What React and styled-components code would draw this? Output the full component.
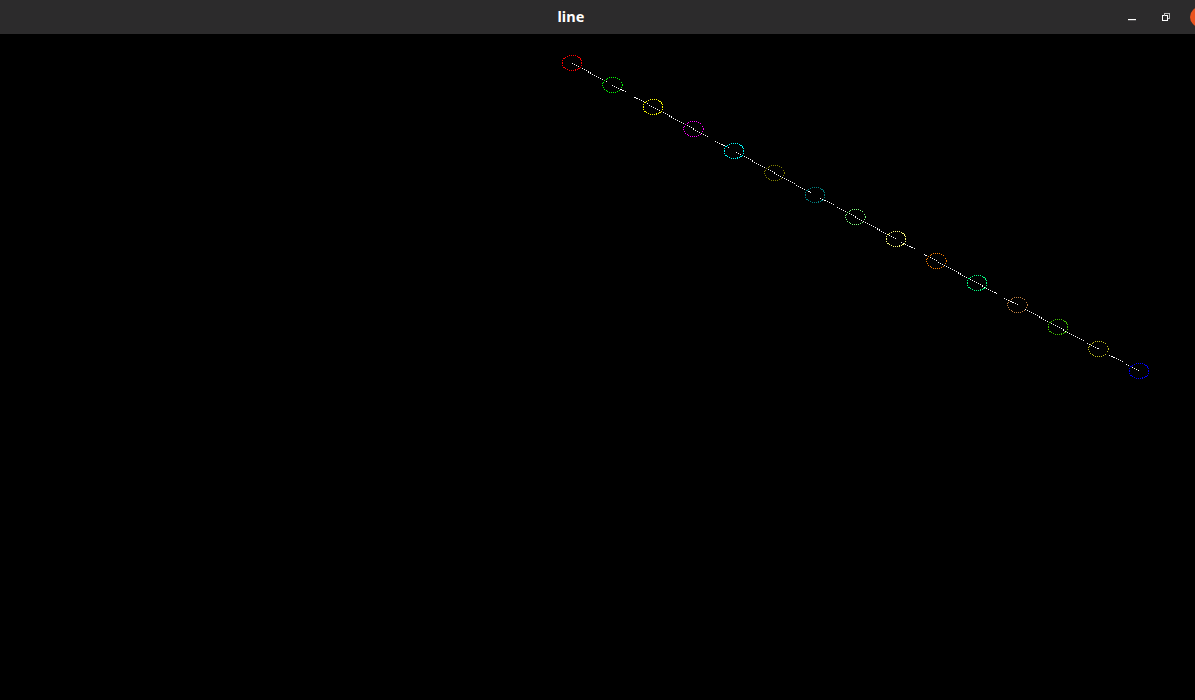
import React from "react";
import styled, { createGlobalStyle } from "styled-components";

const Global = createGlobalStyle`
  html, body { margin: 0; padding: 0; background: #000; overflow: hidden; }
  #root { width: 1195px; height: 700px; }
`;

const Window = styled.div`
  width: 1195px;
  height: 700px;
  display: flex;
  flex-direction: column;
  background: #000;
`;

const TitleBar = styled.div`
  height: 34px;
  flex: 0 0 34px;
  background: #2c2b2c;
  display: flex;
  align-items: center;
  overflow: hidden;
`;

const Title = styled.div`
  flex: 1;
  text-align: center;
  padding-left: 27px;
  color: #ffffff;
  font-family: "Noto Sans", "DejaVu Sans", sans-serif;
  font-weight: 700;
  font-size: 14.5px;
  letter-spacing: 0.1px;
  margin-top: -3px;
`;

const Controls = styled.div`
  display: flex;
  align-items: center;
  margin-right: -22px;
`;

const CtrlButton = styled.div`
  width: 34px;
  height: 34px;
  display: flex;
  align-items: center;
  justify-content: center;
`;

const CloseDot = styled.div`
  width: 20px;
  height: 20px;
  border-radius: 50%;
  background: #e95420;
`;

const Canvas = styled.div`
  flex: 1;
  background: #000;
`;

const colors = [
  "#ff0000", "#00ff00", "#ffff00", "#ff00ff", "#00ffff",
  "#808000", "#008080", "#80ff80", "#ffff80", "#ff8000",
  "#00ff80", "#c08040", "#40c000", "#c0c020", "#0000ff",
];

const X0 = 572, Y0 = 29, DX = 40.5, DY = 22;

export default function App() {
  const pts = colors.map((c, i) => ({ x: X0 + DX * i, y: Y0 + DY * i, c }));
  const last = pts[pts.length - 1];
  return (
    <>
      <Global />
      <Window>
        <TitleBar>
          <Title>line</Title>
          <Controls>
            <CtrlButton>
              <svg width="10" height="10" viewBox="0 0 10 10">
                <rect x="1" y="7" width="8" height="1.2" fill="#fff" />
              </svg>
            </CtrlButton>
            <CtrlButton>
              <svg width="10" height="10" viewBox="0 0 10 10" shapeRendering="crispEdges">
                <rect x="1.5" y="3.5" width="5" height="5" fill="none" stroke="#fff" strokeWidth="1" />
                <path d="M3.5 3.5 V1.5 H8.5 V6.5 H6.5" fill="none" stroke="#bbb" strokeWidth="1" />
              </svg>
            </CtrlButton>
            <CtrlButton>
              <CloseDot />
            </CtrlButton>
          </Controls>
        </TitleBar>
        <Canvas>
          <svg width="1195" height="666" viewBox="0 0 1195 666">
            <line
              x1={X0}
              y1={Y0}
              x2={last.x}
              y2={last.y}
              stroke="#ffffff"
              strokeWidth="1"
              strokeDasharray="1 1.3"
              shapeRendering="crispEdges"
            />
            {pts.map((p, i) => (
              <ellipse
                key={i}
                cx={p.x}
                cy={p.y}
                rx="10"
                ry="7.5"
                fill="none"
                stroke={p.c}
                strokeWidth="1"
                strokeDasharray="1 1"
                shapeRendering="crispEdges"
              />
            ))}
          </svg>
        </Canvas>
      </Window>
    </>
  );
}
